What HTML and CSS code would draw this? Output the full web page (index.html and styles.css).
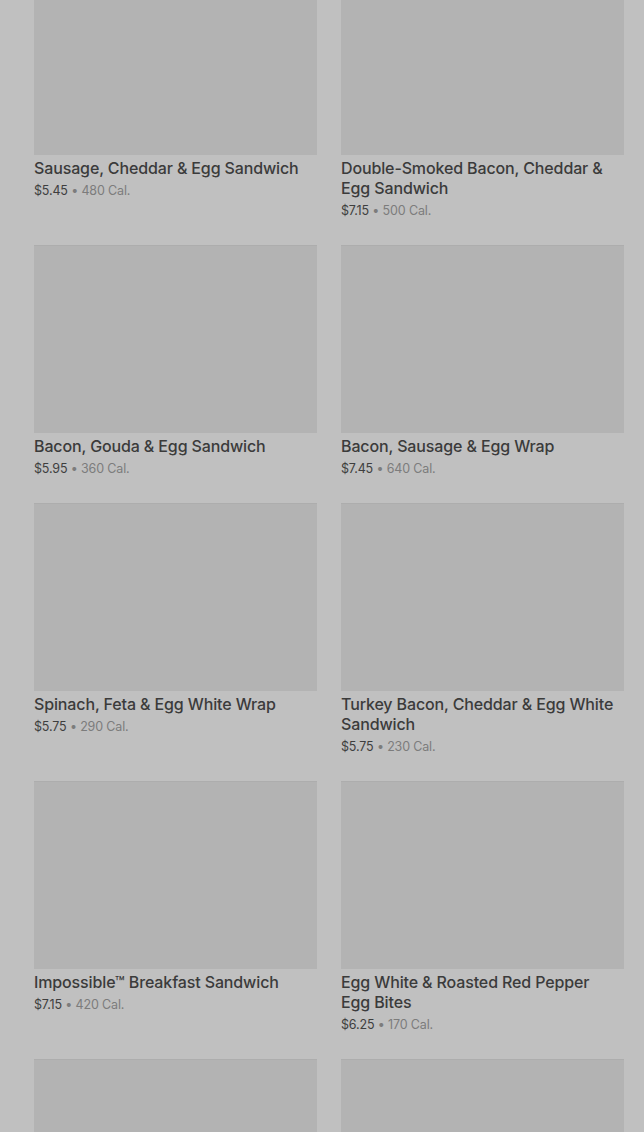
FILE: index.html
```html
<!DOCTYPE html>
<html lang="en">
<head>
  <meta charset="UTF-8" />
  <meta name="viewport" content="width=device-width, initial-scale=1.0"/>
  <title>Hot Breakfast</title>
  <link rel="stylesheet" href="styles.css">
</head>
<body>

<div class="menu">
  <div class="item">
    <div class="thumb"></div>
    <h3>Sausage, Cheddar &amp; Egg Sandwich</h3>
    <p class="meta"><span class="price">$5.45</span> • 480 Cal.</p>
  </div>
  <div class="item">
    <div class="thumb"></div>
    <h3>Double-Smoked Bacon, Cheddar &amp; Egg Sandwich</h3>
    <p class="meta"><span class="price">$7.15</span> • 500 Cal.</p>
  </div>

  <div class="item">
    <div class="thumb"></div>
    <h3>Bacon, Gouda &amp; Egg Sandwich</h3>
    <p class="meta"><span class="price">$5.95</span> • 360 Cal.</p>
  </div>
  <div class="item">
    <div class="thumb"></div>
    <h3>Bacon, Sausage &amp; Egg Wrap</h3>
    <p class="meta"><span class="price">$7.45</span> • 640 Cal.</p>
  </div>

  <div class="item">
    <div class="thumb"></div>
    <h3>Spinach, Feta &amp; Egg White Wrap</h3>
    <p class="meta"><span class="price">$5.75</span> • 290 Cal.</p>
  </div>
  <div class="item">
    <div class="thumb"></div>
    <h3>Turkey Bacon, Cheddar &amp; Egg White Sandwich</h3>
    <p class="meta"><span class="price">$5.75</span> • 230 Cal.</p>
  </div>

  <div class="item">
    <div class="thumb"></div>
    <h3>Impossible™ Breakfast Sandwich</h3>
    <p class="meta"><span class="price">$7.15</span> • 420 Cal.</p>
  </div>
  <div class="item">
    <div class="thumb"></div>
    <h3>Egg White &amp; Roasted Red Pepper Egg Bites</h3>
    <p class="meta"><span class="price">$6.25</span> • 170 Cal.</p>
  </div>

  <div class="item">
    <div class="thumb"></div>
  </div>
  <div class="item">
    <div class="thumb"></div>
  </div>
</div>

</body>
</html>
```

FILE: styles.css
```css
html, body {
  height: 100%;
  overflow: hidden;
}
body {
  font-family: Inter, "Liberation Sans", sans-serif;
  background: #c0c0c0;
  margin: 0;
  padding: 0;
}
.menu {
  display: grid;
  grid-template-columns: 283px 283px;
  column-gap: 24px;
  row-gap: 25px;
  padding: 0 20px 0 34px;
  margin-top: -33px;
}
.thumb {
  height: 187px;
  background: #b3b3b3;
  border-top: 1px solid #adadad;
}
.item h3 {
  margin: 3px 0 0;
  padding-right: 8px;
  font-size: 16px;
  line-height: 20px;
  font-weight: 500;
  letter-spacing: -0.13px;
  color: #3b3b3b;
}
.meta {
  margin: 4px 0 0;
  font-size: 12.5px;
  line-height: 18px;
  letter-spacing: -0.15px;
  color: #7c7c7c;
}
.price {
  color: #3e3e3e;
}
```
